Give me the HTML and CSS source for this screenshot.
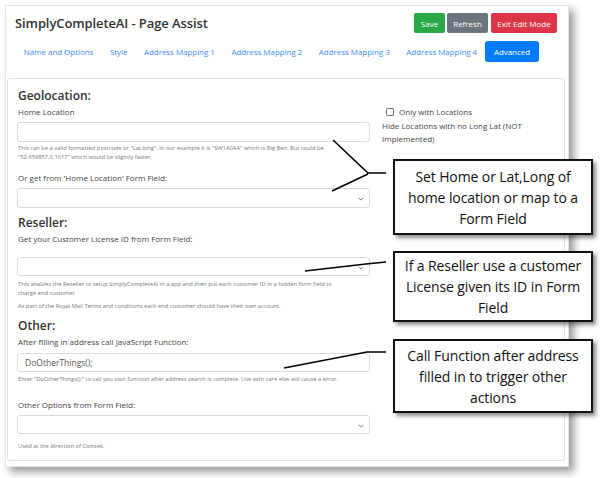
FILE: index.html
```html
<!DOCTYPE html>
<html>
<head>
<meta charset="utf-8">
<link rel="stylesheet" href="styles.css">
</head>
<body>
<div class="window">
  <div class="titlebar">
    <div class="title">SimplyCompleteAI - Page Assist</div>
    <div class="actions">
      <span class="btn btn-save">Save</span>
      <span class="btn btn-refresh">Refresh</span>
      <span class="btn btn-exit">Exit Edit Mode</span>
    </div>
  </div>
  <div class="tabs">
    <span class="tab">Name and Options</span>
    <span class="tab">Style</span>
    <span class="tab">Address Mapping 1</span>
    <span class="tab">Address Mapping 2</span>
    <span class="tab">Address Mapping 3</span>
    <span class="tab">Address Mapping 4</span>
    <span class="tab active">Advanced</span>
  </div>
  <div class="card">
    <div class="geo">
      <div class="col-main">
        <div class="section">Geolocation:</div>
        <div class="label">Home Location</div>
        <div class="field"></div>
        <div class="help">This can be a valid formatted postcode or "Lat,long". In our example it is "SW1A0AA" which is Big Ben. But could be "52.659857,0.1617" which would be slightly faster.</div>
        <div class="label gap-l">Or get from 'Home Location' Form Field:</div>
        <div class="field select"><svg class="chev" viewBox="0 0 8 5" width="6" height="4"><path d="M1 1 L4 4 L7 1" fill="none" stroke="#666" stroke-width="1.1"/></svg></div>
      </div>
      <div class="col-side">
        <div class="check"><span class="box"></span>Only with Locations</div>
        <div class="side-text">Hide Locations with no Long Lat (NOT Implemented)</div>
      </div>
    </div>

    <div class="section s2">Reseller:</div>
    <div class="label">Get your Customer License ID from Form Field:</div>
    <div class="field select f2"><svg class="chev" viewBox="0 0 8 5" width="6" height="4"><path d="M1 1 L4 4 L7 1" fill="none" stroke="#666" stroke-width="1.1"/></svg></div>
    <div class="help h2">This anables the Reseller to setup SimplyCompleteAI in a app and then put each customer ID in a hidden form field to charge end customer.</div>
    <div class="help h3">As part of the Royal Mail Terms and conditions each end customer should have their own account.</div>

    <div class="section s3">Other:</div>
    <div class="label">After filling in address call JavaScript Function:</div>
    <div class="field f3">DoOtherThings();</div>
    <div class="help h4">Enter "DoOtherThings();" to call you own function after address search is complete. Use with care else will cause a error.</div>
    <div class="label l5">Other Options from Form Field:</div>
    <div class="field select f4"><svg class="chev" viewBox="0 0 8 5" width="6" height="4"><path d="M1 1 L4 4 L7 1" fill="none" stroke="#666" stroke-width="1.1"/></svg></div>
    <div class="help h5">Used at the direction of Comtek.</div>
  </div>
</div>

<svg class="lines" width="602" height="478" viewBox="0 0 602 478">
  <path d="M333 140 L368 173 L386 173 M368 174 L332 191" fill="none" stroke="#000" stroke-width="1.6"/>
  <path d="M305 271 L366 264 L386 262" fill="none" stroke="#000" stroke-width="1.6"/>
  <path d="M284 368 L367 352 L386 352" fill="none" stroke="#000" stroke-width="1.6"/>
</svg>

<div class="callout c1">Set Home or Lat,Long of home location or map to a Form Field</div>
<div class="callout c2">If a Reseller use a customer License given its ID in Form Field</div>
<div class="callout c3">Call Function after address filled in to trigger other actions</div>
</body>
</html>
```

FILE: styles.css
```css
html, body {
  margin: 0;
  padding: 0;
  background: #fff;
}
body {
  width: 602px;
  height: 478px;
  position: relative;
  overflow: hidden;
  font-family: "Open Sans", "Noto Sans", sans-serif;
  color: #333;
}
.window {
  margin: 5px 0 0 5px;
  width: 564px;
  height: 462px;
  box-sizing: border-box;
  border: 1px solid #e6e6e6;
  background: #fff;
  box-shadow: 5px 5px 8px rgba(0, 0, 0, 0.4);
  padding-top: 7px;
}
.titlebar {
  display: flex;
  justify-content: space-between;
  align-items: center;
  height: 20px;
  padding: 0 11px 0 9px;
}
.title {
  font-size: 13px;
  font-weight: 600;
  color: #333;
  letter-spacing: -0.1px;
}
.actions {
  display: flex;
  gap: 2px;
}
.btn {
  display: flex;
  align-items: center;
  justify-content: center;
  height: 20px;
  font-size: 8px;
  color: #fff;
  border-radius: 2px;
  box-sizing: border-box;
}
.btn-save { width: 31px; background: #28a745; }
.btn-refresh { width: 41px; background: #6c757d; }
.btn-exit { width: 66px; background: #dc3545; margin-left: 1px; }
.tabs {
  display: flex;
  align-items: center;
  margin-top: 8px;
  height: 21px;
  padding-left: 9.5px;
}
.tab {
  font-size: 8px;
  color: #3b8cf7;
  padding: 0 8.3px;
  height: 21px;
  display: flex;
  align-items: center;
  white-space: nowrap;
  letter-spacing: -0.05px;
}
.tab.active {
  background: #007bff;
  color: #fff;
  border-radius: 3px;
  padding: 0 8.5px;
}
.card {
  margin: 16px 0 0 1px;
  width: 558px;
  height: 383px;
  box-sizing: border-box;
  border: 1px solid #e1e1e1;
  border-radius: 3px;
  padding: 8px 10px 0 9px;
}
.geo {
  display: grid;
  grid-template-columns: 353px 150px;
  column-gap: 12px;
}
.section {
  font-size: 12px;
  font-weight: 600;
  line-height: 17px;
  color: #333;
  padding-left: 1px;
}
.label {
  font-size: 8px;
  line-height: 12px;
  margin-top: 2px;
  color: #444;
  padding-left: 1px;
}
.gap-l { margin-top: 10px; }
.field {
  width: 353px;
  height: 20px;
  box-sizing: border-box;
  border: 1px solid #dcdcdc;
  border-radius: 3px;
  margin-top: 4px;
  background: #fff;
  position: relative;
  font-size: 8.5px;
  color: #555;
  display: flex;
  align-items: center;
  padding-left: 7px;
}
.select .chev {
  position: absolute;
  right: 5px;
  top: 8px;
}
.help {
  font-size: 5.75px;
  line-height: 9px;
  color: #777;
  margin-top: 1.5px;
  width: 345px;
  padding-left: 1px;
}
.col-side {
  padding-top: 19px;
}
.check {
  font-size: 8px;
  line-height: 12px;
  color: #444;
  display: flex;
  align-items: center;
  padding-left: 4px;
}
.box {
  width: 6px;
  height: 6px;
  border: 1px solid #777;
  border-radius: 1px;
  margin-right: 5px;
}
.side-text {
  font-size: 8px;
  line-height: 13px;
  color: #444;
  margin-top: 1px;
}
.s2 { margin-top: 6px; }
.f2 { margin-top: 12px; height: 19px; }
.h2 { margin-top: 4px; width: 326px; }
.h3 { margin-top: 4px; }
.s3 { margin-top: 6px; }
.f3 { margin-top: 5px; height: 19px; }
.h4 { margin-top: 3.5px; }
.l5 { margin-top: 15px; }
.f4 { height: 19px; }
.h5 { margin-top: 8px; }

.lines {
  position: absolute;
  left: 0;
  top: 0;
  pointer-events: none;
}
.callout {
  position: absolute;
  left: 393px;
  width: 200px;
  box-sizing: border-box;
  background: #fff;
  border: 2px solid #111;
  box-shadow: 3px 3px 4px rgba(0, 0, 0, 0.45);
  font-family: "Open Sans", "Noto Sans", sans-serif;
  font-size: 14px;
  line-height: 21px;
  color: #111;
  text-align: center;
  display: flex;
  align-items: center;
  justify-content: center;
  padding: 0 3px;
  letter-spacing: -0.1px;
}
.c1 { top: 159px; height: 76px; }
.c2 { top: 251px; height: 71px; }
.c3 { top: 339px; height: 74px; }
```
